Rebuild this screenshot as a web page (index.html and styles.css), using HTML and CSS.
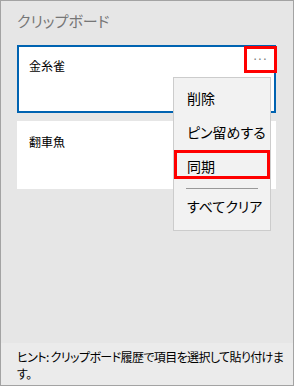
FILE: index.html
```html
<!DOCTYPE html>
<html lang="ja">
<head>
    <meta charset="UTF-8">
    <meta name="viewport" content="width=device-width, initial-scale=1.0">
    <title>クリップボード</title>
    <link rel="stylesheet" href="styles.css">
</head>
<body>
    <div class="panel">
        <h1 class="title">クリップボード</h1>
        <div class="clip-list">
            <div class="clip-item selected">
                <span class="clip-text">金糸雀</span>
                <button class="more-button mark">&middot;&middot;&middot;</button>
            </div>
            <div class="clip-item">
                <span class="clip-text">翻車魚</span>
            </div>
        </div>

        <ul class="context-menu">
            <li class="menu-item">削除</li>
            <li class="menu-item">ピン留めする</li>
            <li class="menu-item marked">同期</li>
            <li class="menu-separator"></li>
            <li class="menu-item">すべてクリア</li>
        </ul>

        <div class="hint">ヒント: クリップボード履歴で項目を選択して貼り付けます。</div>
    </div>
</body>
</html>
```

FILE: styles.css
```css
body {
    margin: 0;
    padding: 0;
    font-family: "Noto Sans CJK JP", "Noto Sans", sans-serif;
    font-feature-settings: "palt";
    background-color: #e6e6e6;
}

.panel {
    position: relative;
    box-sizing: border-box;
    width: 294px;
    height: 386px;
    border: 1px solid #a3a3a3;
    background-color: #e6e6e6;
    display: flex;
    flex-direction: column;
}

.title {
    margin: 0;
    padding: 10px 16px 0 16px;
    height: 34px;
    font-size: 15px;
    font-weight: normal;
    line-height: 20px;
    color: #767676;
}

.clip-list {
    display: flex;
    flex-direction: column;
    gap: 8px;
    padding: 0 17px 0 16px;
}

.clip-item {
    position: relative;
    box-sizing: border-box;
    height: 68px;
    padding: 7px 12px;
    background-color: #ffffff;
}

.clip-item.selected {
    border: 2px solid #0063b1;
    padding: 5px 10px;
}

.clip-text {
    font-size: 12px;
    line-height: 18px;
    color: #000000;
}

.more-button {
    position: absolute;
    top: -1px;
    right: -3px;
    box-sizing: border-box;
    width: 33px;
    height: 27px;
    padding: 0;
    border: none;
    background: #ffffff;
    color: #7a7a7a;
    font-size: 12px;
    letter-spacing: 1px;
    font-family: "DejaVu Sans", sans-serif;
}

.mark {
    border: 3px solid #ff0000;
}

.context-menu {
    position: absolute;
    top: 76px;
    left: 172px;
    box-sizing: border-box;
    width: 98px;
    margin: 0;
    padding: 3px 0 7px 0;
    list-style: none;
    background-color: #f2f2f2;
    border: 1px solid #cccccc;
}

.menu-item {
    position: relative;
    height: 34px;
    padding-left: 13px;
    font-size: 14px;
    line-height: 34px;
    color: #000000;
}

.menu-item.marked::after {
    content: "";
    position: absolute;
    top: 1px;
    left: 0;
    right: 0;
    height: 29px;
    border: 3px solid #ff0000;
    box-sizing: border-box;
}

.menu-separator {
    height: 1px;
    margin: 5px 12px 0 12px;
    background-color: #999999;
}

.hint {
    margin-top: auto;
    padding: 5px 4px 3px 16px;
    background-color: #ebebeb;
    font-size: 12px;
    letter-spacing: -0.6px;
    line-height: 17px;
    color: #000000;
}
```
